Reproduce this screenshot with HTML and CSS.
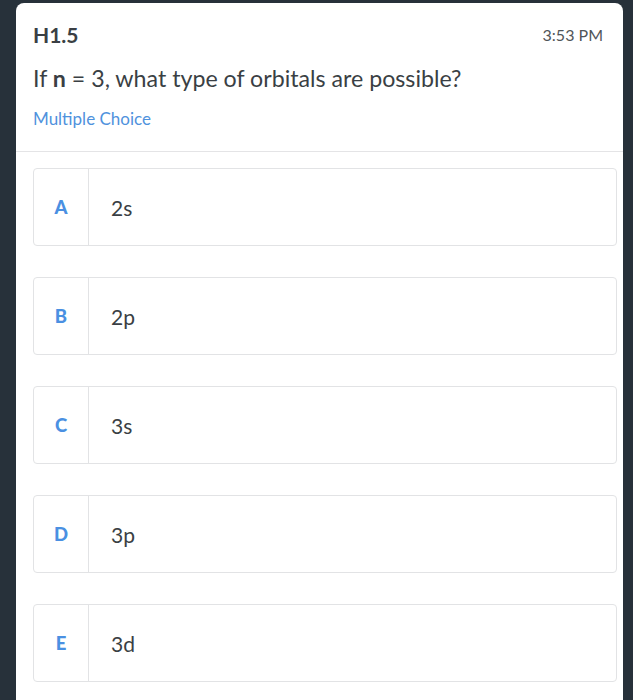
FILE: index.html
```html
<!DOCTYPE html>
<html>
<head>
<meta charset="utf-8">
<link rel="stylesheet" href="styles.css">
</head>
<body>
<div class="card">
  <div class="head">
    <div class="top-row">
      <span class="title">H1.5</span>
      <span class="time">3:53 PM</span>
    </div>
    <div class="question">If <b>n</b> = 3, what type of orbitals are possible?</div>
    <div class="kind">Multiple Choice</div>
  </div>
  <div class="options">
    <div class="option"><div class="letter">A</div><div class="answer">2s</div></div>
    <div class="option"><div class="letter">B</div><div class="answer">2p</div></div>
    <div class="option"><div class="letter">C</div><div class="answer">3s</div></div>
    <div class="option"><div class="letter">D</div><div class="answer">3p</div></div>
    <div class="option"><div class="letter">E</div><div class="answer">3d</div></div>
  </div>
</div>
</body>
</html>
```

FILE: styles.css
```css
html, body {
  margin: 0;
  padding: 0;
  height: 700px;
  overflow: hidden;
}
body {
  background: #27313a;
  font-family: Lato, "Open Sans", sans-serif;
  color: #363b40;
}
.card {
  margin: 3px 10px 0 16px;
  background: #fff;
  border-radius: 8px 8px 0 0;
  height: 697px;
}
.head {
  padding: 18px 20px 20px 17px;
  border-bottom: 1px solid #e4e4e6;
}
.top-row {
  display: flex;
  justify-content: space-between;
  align-items: center;
  height: 26px;
}
.title {
  font-size: 21px;
  font-weight: 700;
  color: #3a3f44;
}
.time {
  font-size: 16px;
  color: #505559;
}
.question {
  margin-top: 16px;
  font-size: 23.2px;
  line-height: 30px;
  color: #3a3f44;
}
.question b {
  font-weight: 700;
}
.kind {
  margin-top: 14px;
  font-size: 17px;
  line-height: 24px;
  color: #4f92dd;
}
.options {
  padding: 16px 6px 0 17px;
  display: flex;
  flex-direction: column;
  gap: 31px;
}
.option {
  display: flex;
  height: 76px;
  border: 1px solid #e2e3e5;
  border-radius: 4px;
}
.letter {
  width: 54px;
  border-right: 1px solid #e2e3e5;
  display: flex;
  align-items: center;
  justify-content: center;
  font-size: 18.5px;
  font-weight: 900;
  color: #4a90e2;
}
.answer {
  display: flex;
  align-items: center;
  padding-left: 22px;
  font-size: 21px;
  color: #3a3f44;
}
```
